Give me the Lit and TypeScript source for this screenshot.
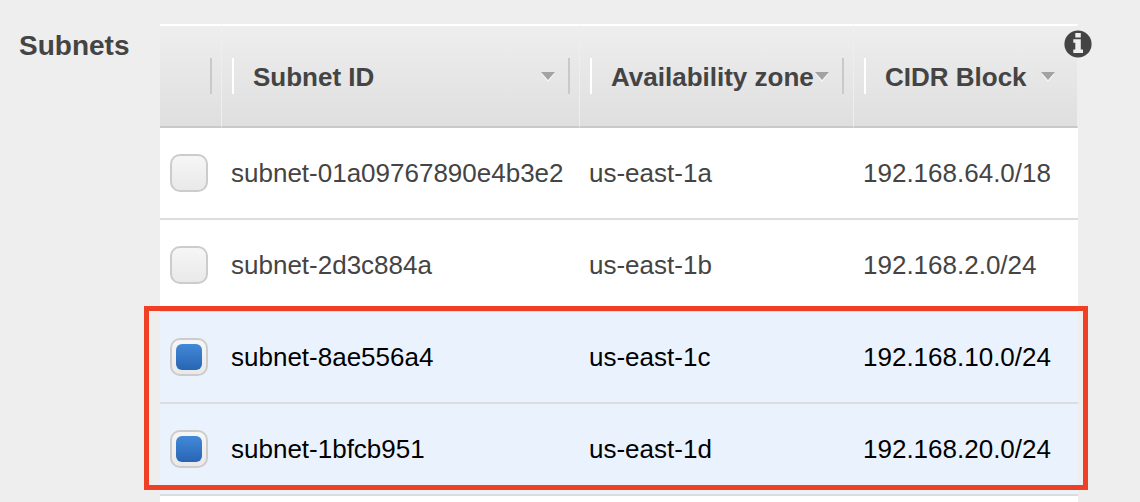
import { LitElement, html, css } from "lit";
import { customElement, state } from "lit/decorators.js";
import { classMap } from "lit/directives/class-map.js";

interface Subnet {
  id: string;
  zone: string;
  cidr: string;
  selected: boolean;
}

@customElement("app-root")
export class AppRoot extends LitElement {
  static styles = css`
    :host {
      display: block;
      background: #eee;
      color: #444;
      font-family: "Liberation Sans", Arial, sans-serif;
      font-size: 26px;
      line-height: 30px;
    }
    * {
      box-sizing: border-box;
    }
    .page {
      display: flex;
      min-height: 100vh;
      padding: 24px 62px 0 19px;
    }
    .title {
      flex: 0 0 141px;
      margin: 0;
      padding-top: 6px;
      font-size: 28px;
      line-height: 32px;
      font-weight: bold;
    }
    .panel {
      position: relative;
      flex: 1;
      min-width: 0;
      background: #fff;
    }
    .grid {
      width: 100%;
      table-layout: fixed;
      border-collapse: separate;
      border-spacing: 0;
    }
    .col-check {
      width: 62px;
    }
    .col-id {
      width: 358px;
    }
    .col-zone {
      width: 274px;
    }
    th {
      height: 104px;
      padding: 0 9px 0 10px;
      border-top: 2px solid #fff;
      border-right: 1px solid #eee;
      border-bottom: 2px solid #c9c9c9;
      background: linear-gradient(#eee, #dfdfdf);
      vertical-align: middle;
    }
    .sort,
    .divider {
      display: flex;
      align-items: center;
      width: 100%;
      height: 36px;
      border: 0 solid #c9c9c9;
      border-right-width: 2px;
    }
    .sort {
      justify-content: space-between;
      margin: 0;
      padding: 2px 13px 0 19px;
      border-left: 2px solid #fff;
      background: none;
      color: inherit;
      font: inherit;
      font-weight: bold;
      white-space: nowrap;
      cursor: pointer;
    }
    th:last-child .sort {
      border-right-width: 0;
    }
    .arrow {
      flex: none;
      width: 14px;
      height: 10px;
    }
    td {
      height: 92px;
      padding: 0 9px;
      border-bottom: 2px solid #ddd;
      vertical-align: middle;
      white-space: nowrap;
    }
    .pick {
      padding: 0 10px;
    }
    .selected {
      background: #eaf3fd;
      color: #000;
    }
    .box {
      appearance: none;
      display: block;
      width: 38px;
      height: 38px;
      margin: 0;
      padding: 4px;
      border: 2px solid #ccc;
      border-radius: 10px;
      background: linear-gradient(#f6f6f6, #e9e9e9);
    }
    .box:checked::before {
      content: "";
      display: block;
      height: 26px;
      border-radius: 6px;
      background: linear-gradient(#4389d9, #2765b3);
    }
    .info {
      position: absolute;
      top: 6px;
      right: -14px;
      width: 28px;
      height: 28px;
      padding: 0;
      border: 0;
      background: none;
    }
    .info svg {
      display: block;
    }
    .highlight {
      position: absolute;
      top: 282px;
      left: -16px;
      right: -10px;
      height: 184px;
      border: 5px solid #ef4026;
      pointer-events: none;
    }
  `;

  @state()
  private subnets: Subnet[] = [
    { id: "subnet-01a09767890e4b3e2", zone: "us-east-1a", cidr: "192.168.64.0/18", selected: false },
    { id: "subnet-2d3c884a", zone: "us-east-1b", cidr: "192.168.2.0/24", selected: false },
    { id: "subnet-8ae556a4", zone: "us-east-1c", cidr: "192.168.10.0/24", selected: true },
    { id: "subnet-1bfcb951", zone: "us-east-1d", cidr: "192.168.20.0/24", selected: true },
  ];

  private toggle(id: string) {
    this.subnets = this.subnets.map((s) => (s.id === id ? { ...s, selected: !s.selected } : s));
  }

  private sortBy(key: "id" | "zone" | "cidr") {
    this.subnets = [...this.subnets].sort((a, b) => a[key].localeCompare(b[key]));
  }

  private header(text: string, key: "id" | "zone" | "cidr") {
    return html`<th scope="col">
      <button class="sort" type="button" @click=${() => this.sortBy(key)}>
        <span>${text}</span>
        <svg class="arrow" viewBox="0 0 14 10" aria-hidden="true">
          <path d="M0 1.5h14L7 10z" fill="#f6f6f6" />
          <path d="M0 0h14L7 8z" fill="#a3a3a3" />
        </svg>
      </button>
    </th>`;
  }

  render() {
    return html`
      <main class="page">
        <h2 class="title" id="title">Subnets</h2>
        <div class="panel">
          <table class="grid" aria-labelledby="title">
            <colgroup>
              <col class="col-check" />
              <col class="col-id" />
              <col class="col-zone" />
              <col />
            </colgroup>
            <thead>
              <tr>
                <th scope="col"><span class="divider"></span></th>
                ${this.header("Subnet ID", "id")}
                ${this.header("Availability zone", "zone")}
                ${this.header("CIDR Block", "cidr")}
              </tr>
            </thead>
            <tbody>
              ${this.subnets.map(
                (s) => html`<tr class=${classMap({ selected: s.selected })}>
                  <td class="pick">
                    <input
                      class="box"
                      type="checkbox"
                      id=${`pick-${s.id}`}
                      .checked=${s.selected}
                      @change=${() => this.toggle(s.id)}
                    />
                  </td>
                  <td><label for=${`pick-${s.id}`}>${s.id}</label></td>
                  <td>${s.zone}</td>
                  <td>${s.cidr}</td>
                </tr>`
              )}
            </tbody>
          </table>
          <button class="info" type="button" aria-label="Information">
            <svg width="28" height="28" viewBox="0 0 28 28" aria-hidden="true">
              <circle cx="14" cy="14" r="13.6" fill="#444" />
              <path
                d="M11.3 3h5.5v4.6h-5.5zM9.3 9.2h7.5v10.2h2.2v3.6H9.3v-3.6h2v-6.6h-2z"
                fill="#eee"
              />
            </svg>
          </button>
          <div class="highlight"></div>
        </div>
      </main>
    `;
  }
}
